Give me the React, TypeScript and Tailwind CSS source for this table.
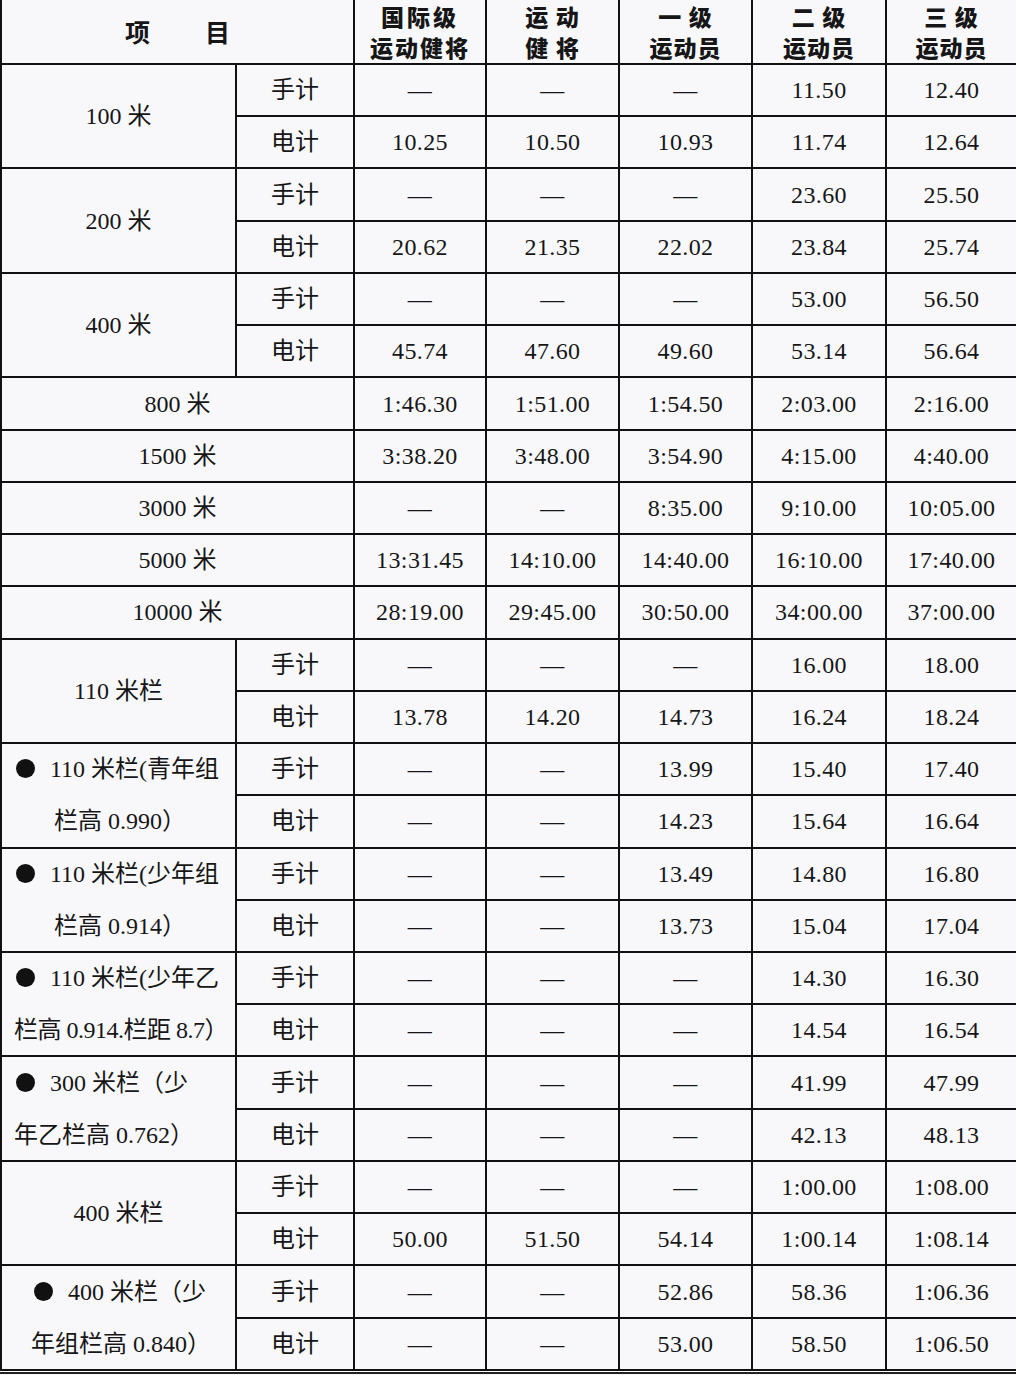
import React from 'react';

type Pair = { kind: 'pair'; label: React.ReactNode; hand: string[]; elec: string[] };
type Single = { kind: 'single'; label: string; values: string[] };
type Row = Pair | Single;

const D = '—';

function Dot() {
  return <span className="inline-block w-[19px] h-[19px] rounded-full bg-[#111] mr-[15px] align-[-1px]" />;
}

function TwoLine({ a, b, pa, pb, tight }: { a: string; b: string; pa: string; pb: string; tight?: boolean }) {
  return (
    <div className="flex flex-col w-full">
      <span className={`${pa} leading-[52px] whitespace-nowrap`}>
        <Dot />
        {a}
      </span>
      <span className={`${pb} leading-[52px] whitespace-nowrap ${tight ? 'tracking-[-0.5px]' : ''}`}>{b}</span>
    </div>
  );
}

const rows: Row[] = [
  { kind: 'pair', label: '100 米', hand: [D, D, D, '11.50', '12.40'], elec: ['10.25', '10.50', '10.93', '11.74', '12.64'] },
  { kind: 'pair', label: '200 米', hand: [D, D, D, '23.60', '25.50'], elec: ['20.62', '21.35', '22.02', '23.84', '25.74'] },
  { kind: 'pair', label: '400 米', hand: [D, D, D, '53.00', '56.50'], elec: ['45.74', '47.60', '49.60', '53.14', '56.64'] },
  { kind: 'single', label: '800 米', values: ['1:46.30', '1:51.00', '1:54.50', '2:03.00', '2:16.00'] },
  { kind: 'single', label: '1500 米', values: ['3:38.20', '3:48.00', '3:54.90', '4:15.00', '4:40.00'] },
  { kind: 'single', label: '3000 米', values: [D, D, '8:35.00', '9:10.00', '10:05.00'] },
  { kind: 'single', label: '5000 米', values: ['13:31.45', '14:10.00', '14:40.00', '16:10.00', '17:40.00'] },
  { kind: 'single', label: '10000 米', values: ['28:19.00', '29:45.00', '30:50.00', '34:00.00', '37:00.00'] },
  { kind: 'pair', label: '110 米栏', hand: [D, D, D, '16.00', '18.00'], elec: ['13.78', '14.20', '14.73', '16.24', '18.24'] },
  {
    kind: 'pair',
    label: <TwoLine a="110 米栏(青年组" b="栏高 0.990）" pa="pl-[14px]" pb="pl-[52px]" />,
    hand: [D, D, '13.99', '15.40', '17.40'],
    elec: [D, D, '14.23', '15.64', '16.64'],
  },
  {
    kind: 'pair',
    label: <TwoLine a="110 米栏(少年组" b="栏高 0.914）" pa="pl-[14px]" pb="pl-[52px]" />,
    hand: [D, D, '13.49', '14.80', '16.80'],
    elec: [D, D, '13.73', '15.04', '17.04'],
  },
  {
    kind: 'pair',
    label: <TwoLine a="110 米栏(少年乙" b="栏高 0.914.栏距 8.7）" pa="pl-[14px]" pb="pl-[12px]" tight />,
    hand: [D, D, D, '14.30', '16.30'],
    elec: [D, D, D, '14.54', '16.54'],
  },
  {
    kind: 'pair',
    label: <TwoLine a="300 米栏（少" b="年乙栏高 0.762）" pa="pl-[14px]" pb="pl-[12px]" />,
    hand: [D, D, D, '41.99', '47.99'],
    elec: [D, D, D, '42.13', '48.13'],
  },
  { kind: 'pair', label: '400 米栏', hand: [D, D, D, '1:00.00', '1:08.00'], elec: ['50.00', '51.50', '54.14', '1:00.14', '1:08.14'] },
  {
    kind: 'pair',
    label: <TwoLine a="400 米栏（少" b="年组栏高 0.840）" pa="pl-[32px]" pb="pl-[29px]" />,
    hand: [D, D, '52.86', '58.36', '1:06.36'],
    elec: [D, D, '53.00', '58.50', '1:06.50'],
  },
];

const headers = [
  { top: '国际级', bottom: '运动健将', tt: 'tracking-[3px]', tb: 'tracking-[2px]' },
  { top: '运 动', bottom: '健 将', tt: 'tracking-[1px]', tb: 'tracking-[1px]' },
  { top: '一 级', bottom: '运动员', tt: 'tracking-[1px]', tb: 'tracking-[1px]' },
  { top: '二 级', bottom: '运动员', tt: 'tracking-[1px]', tb: 'tracking-[1px]' },
  { top: '三 级', bottom: '运动员', tt: 'tracking-[1px]', tb: 'tracking-[1px]' },
];

const cell = 'bg-[#f8f8fb] flex items-center justify-center';

function Val({ v }: { v: string }) {
  return <div className={`${cell} tracking-[0.4px]`}>{v}</div>;
}

export default function App() {
  return (
    <div
      className="w-[1016px] h-[1375px] bg-[#f8f8fb] text-[#161616] text-[24px]"
      style={{ fontFamily: '"Liberation Serif", "Noto Sans CJK SC", serif' }}
    >
      <div className="grid grid-cols-[233px_116px_130px_131px_131px_132px_129px] grid-rows-[63px_repeat(25,50.24px)] gap-[2px] bg-[#111] pl-[2px] pb-[2px]">
        <div className={`${cell} col-span-2 font-bold text-[25px]`} style={{ fontFamily: '"Noto Sans CJK SC", sans-serif' }}>
          <span className="mr-[55px]">项</span>
          <span>目</span>
        </div>
        {headers.map((h, i) => (
          <div
            key={i}
            className={`${cell} flex-col font-black text-[23px] leading-[31px] whitespace-pre`}
            style={{ fontFamily: '"Noto Sans CJK SC", sans-serif' }}
          >
            <span className={h.tt}>{h.top}</span>
            <span className={h.tb}>{h.bottom}</span>
          </div>
        ))}

        {rows.map((r, i) =>
          r.kind === 'pair' ? (
            <React.Fragment key={i}>
              <div className={`${cell} row-span-2`}>{r.label}</div>
              <div className={cell}>手计</div>
              {r.hand.map((v, j) => (
                <Val key={`h${j}`} v={v} />
              ))}
              <div className={cell}>电计</div>
              {r.elec.map((v, j) => (
                <Val key={`e${j}`} v={v} />
              ))}
            </React.Fragment>
          ) : (
            <React.Fragment key={i}>
              <div className={`${cell} col-span-2`}>{r.label}</div>
              {r.values.map((v, j) => (
                <Val key={j} v={v} />
              ))}
            </React.Fragment>
          )
        )}
      </div>
      <div className="h-[1px] bg-white" />
      <div className="h-[2px] bg-[#222]" />
    </div>
  );
}
